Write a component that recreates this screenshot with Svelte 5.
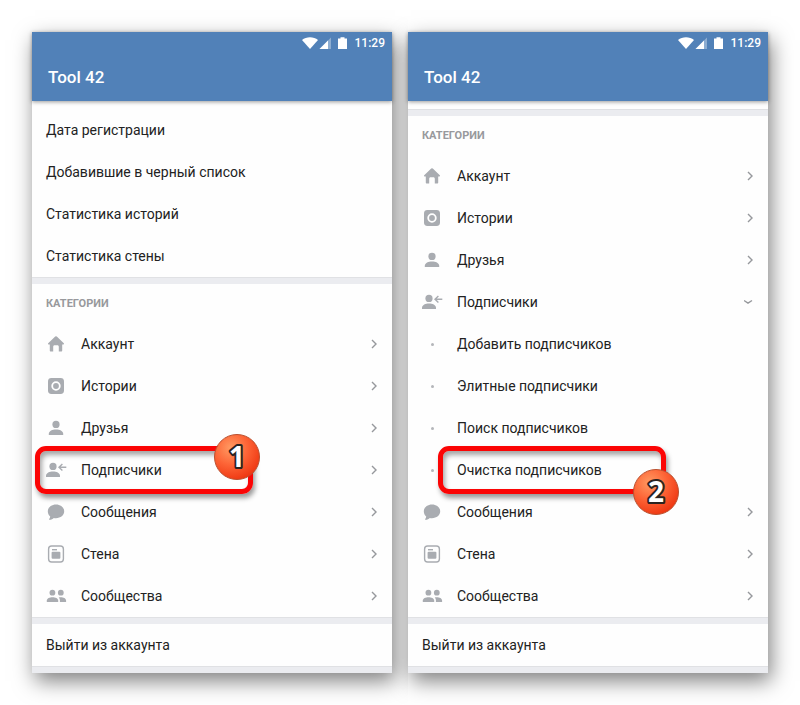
<script lang="ts">
	type Item = {
		label: string;
		icon?: string;
		sub?: boolean;
		open?: boolean;
		mark?: number;
	};

	type Screen = {
		links: string[];
		items: Item[];
	};

	const screens: Screen[] = [
		{
			links: [
				'Дата регистрации',
				'Добавившие в черный список',
				'Статистика историй',
				'Статистика стены'
			],
			items: [
				{ label: 'Аккаунт', icon: 'home' },
				{ label: 'Истории', icon: 'story' },
				{ label: 'Друзья', icon: 'user' },
				{ label: 'Подписчики', icon: 'follower', mark: 1 },
				{ label: 'Сообщения', icon: 'message' },
				{ label: 'Стена', icon: 'wall' },
				{ label: 'Сообщества', icon: 'group' }
			]
		},
		{
			links: [],
			items: [
				{ label: 'Аккаунт', icon: 'home' },
				{ label: 'Истории', icon: 'story' },
				{ label: 'Друзья', icon: 'user' },
				{ label: 'Подписчики', icon: 'follower', open: true },
				{ label: 'Добавить подписчиков', sub: true },
				{ label: 'Элитные подписчики', sub: true },
				{ label: 'Поиск подписчиков', sub: true },
				{ label: 'Очистка подписчиков', sub: true, mark: 2 },
				{ label: 'Сообщения', icon: 'message' },
				{ label: 'Стена', icon: 'wall' },
				{ label: 'Сообщества', icon: 'group' }
			]
		}
	];
</script>

{#snippet icon(name: string | undefined)}
	<svg class="icon" viewBox="0 0 24 24" aria-hidden="true">
		{#if name === 'home'}
			<path
				d="M11.2 4.6a1.2 1.2 0 0 1 1.6 0l7 6.6c.5.5.2 1.2-.4 1.2h-1.2v6.1c0 .6-.4 1-1 1h-2.4v-4.6c0-1-.5-1.6-1.4-1.6h-2.8c-.9 0-1.400.6-1.400 1.600v4.600H6.800c-.6 0-1-.4-1-1v-6.100H4.600c-.6 0-.9-.7-.4-1.200z"
			/>
		{:else if name === 'story'}
			<rect x="4" y="4" width="16" height="16" rx="3.4" />
			<circle class="ring" cx="12" cy="12" r="3.8" />
		{:else if name === 'user'}
			<circle cx="12" cy="8.4" r="3.6" />
			<path d="M4.800 19v-1.300c0-2.700 3.700-4.200 7.200-4.200s7.200 1.500 7.200 4.200V19z" />
		{:else if name === 'follower'}
			<circle cx="9" cy="8.4" r="3.6" />
			<path d="M2 19v-1.300c0-2.700 3.600-4.200 7-4.200s7 1.500 7 4.200V19z" />
			<path class="line" d="M22.300 9.300h-7M18.400 6l-3.400 3.300 3.400 3.300" />
		{:else if name === 'message'}
			<path
				d="M12 4.4c4.6 0 8.2 3 8.2 6.9s-3.6 6.9-8.2 6.9c-.8 0-1.5-.1-2.2-.2-1.1 1.2-2.7 1.9-4.4 1.8-.4 0-.5-.4-.2-.7.6-.7 1-1.5 1-2.5-1.5-1.3-2.4-3.2-2.4-5.3 0-3.9 3.6-6.9 8.2-6.9z"
			/>
		{:else if name === 'wall'}
			<rect class="frame" x="4.6" y="4" width="14.8" height="16" rx="3" />
			<path class="line" d="M8 7.700h5" />
			<rect x="7.600" y="9.800" width="8.800" height="7" rx="1" />
		{:else if name === 'group'}
			<circle cx="8.400" cy="8.700" r="2.900" />
			<circle cx="16.800" cy="8.700" r="2.900" />
			<path d="M2.800 18v-1.400c0-2.200 2.900-3.400 5.700-3.400s5.700 1.200 5.700 3.400V18z" />
			<path
				d="M15.900 18v-1.700c0-1.200-.5-2.200-1.200-2.900.7-.2 1.400-.2 2.100-.2 2.600 0 5.300 1.200 5.300 3.400V18z"
			/>
		{/if}
	</svg>
{/snippet}

<main>
	{#each screens as screen, n}
		<section class="phone">
			<header>
				<div class="status">
					<svg class="signal" viewBox="0 0 46 14" aria-hidden="true">
						<path d="M0 4C4.3.3 11.7.3 16 4L8 13z" />
						<path class="dim" d="M29 1.500V13H17.500z" />
						<path d="M26 4.500V13h-8.500z" />
						<path d="M36 2.500h2.500V1.300h4v1.200H45V13h-9z" />
					</svg>
					<span>11:29</span>
				</div>
				<h1>Tool 42</h1>
			</header>

			<nav class="links">
				{#each screen.links as link}
					<button class="row plain">{link}</button>
				{/each}
			</nav>

			<hr />

			<h2>КАТЕГОРИИ</h2>
			<ul>
				{#each screen.items as item}
					<li>
						<button class="row">
							{#if item.sub}
								<span class="bullet"></span>
							{:else}
								{@render icon(item.icon)}
							{/if}
							<span class="label">{item.label}</span>
							{#if !item.sub}
								<svg class="chevron" viewBox="0 0 12 12" aria-hidden="true">
									{#if item.open}
										<path d="M0 4.500l4 2.700 4-2.700" />
									{:else}
										<path d="M4 2l4 4-4 4" />
									{/if}
								</svg>
							{/if}
						</button>
						{#if item.mark}
							<div class="mark" class:second={n === 1}>
								<svg class="badge" viewBox="0 0 46 46">
									<defs>
										<radialGradient id="ball-{n}" cx="36%" cy="30%" r="75%">
											<stop offset="0" stop-color="#ff9b63" />
											<stop offset="0.5" stop-color="#fd6436" />
											<stop offset="1" stop-color="#ee3510" />
										</radialGradient>
									</defs>
									<circle cx="23" cy="23" r="22.5" fill="url(#ball-{n})" stroke="#b9502f" />
									<text x="23" y="33">{item.mark}</text>
								</svg>
							</div>
						{/if}
					</li>
				{/each}
			</ul>

			<hr />
			<button class="row plain">Выйти из аккаунта</button>
			<hr />
		</section>
	{/each}
</main>

<style>
	:global(body) {
		margin: 0;
		background: #fff;
	}

	main {
		display: flex;
		gap: 16px;
		padding: 32px;
		font-family: Roboto, 'Noto Sans', sans-serif;
		color: #222;
	}

	.phone {
		flex: 1;
		min-width: 0;
		background: #fefefe;
		box-shadow: 3px 8px 20px rgba(0, 0, 0, 0.5);
	}

	/* the two shadows meet in the gap and stay off the screens */
	.phone:first-child {
		position: relative;
		z-index: 1;
		clip-path: inset(-32px -16px -40px -32px);
	}

	header {
		position: relative;
		background: #5181b8;
		color: #fff;
		box-shadow: 0 1px 4px rgba(0, 0, 0, 0.4);
	}

	.status {
		display: flex;
		align-items: center;
		justify-content: flex-end;
		gap: 7px;
		height: 22px;
		padding-right: 7px;
		font-size: 12px;
		font-weight: 500;
	}

	.signal {
		width: 46px;
		height: 14px;
		fill: #fff;
	}

	.signal .dim {
		opacity: 0.35;
	}

	h1 {
		margin: 0;
		padding-left: 16px;
		font-size: 17px;
		font-weight: 500;
		line-height: 47px;
	}

	.links {
		padding-top: 8px;
	}

	hr {
		height: 6px;
		margin: 0;
		border: 0;
		border-top: 1px solid #e0e1e4;
		background: #ebecf0;
	}

	h2 {
		margin: 0;
		padding-left: 14px;
		font-size: 11px;
		font-weight: 700;
		line-height: 39px;
		color: #98999c;
	}

	ul {
		margin: 0;
		padding: 0;
		list-style: none;
	}

	li {
		position: relative;
	}

	.row {
		display: flex;
		align-items: center;
		gap: 13px;
		width: 100%;
		height: 42px;
		padding: 0 12px;
		border: 0;
		background: none;
		color: inherit;
		font: inherit;
		font-size: 14px;
		text-align: left;
	}

	.row.plain {
		padding: 0 14px;
	}

	.label {
		flex: 1;
	}

	.icon {
		width: 24px;
		height: 24px;
		fill: #a9acb1;
	}

	.icon .ring {
		fill: none;
		stroke: #fff;
		stroke-width: 1.8;
	}

	.icon .frame {
		fill: none;
		stroke: #a9acb1;
		stroke-width: 1.4;
	}

	.icon .line {
		fill: none;
		stroke: #a9acb1;
		stroke-width: 1.4;
	}

	.bullet {
		width: 3px;
		height: 3px;
		margin: 0 10px 0 11px;
		border-radius: 50%;
		background: #b4b6ba;
	}

	.chevron {
		width: 12px;
		height: 12px;
		fill: none;
		stroke: #96989c;
		stroke-width: 1.4;
	}

	.mark {
		position: absolute;
		top: -3px;
		bottom: -3px;
		left: 3px;
		width: 208px;
		border: 5px solid #fb0505;
		border-radius: 11px;
		box-shadow:
			2px 4px 5px rgba(0, 0, 0, 0.4),
			inset 2px 4px 5px rgba(0, 0, 0, 0.35);
	}

	.mark.second {
		left: 30px;
		width: 218px;
	}

	.badge {
		position: absolute;
		top: -17px;
		right: -12px;
		width: 46px;
		height: 46px;
	}

	.second .badge {
		top: auto;
		right: -18px;
		bottom: -26px;
	}

	.badge text {
		font-family: 'Open Sans', sans-serif;
		font-size: 28px;
		font-weight: 700;
		text-anchor: middle;
		fill: #fff;
		stroke: #2b2320;
		stroke-width: 4;
		stroke-linejoin: round;
		paint-order: stroke;
	}
</style>
